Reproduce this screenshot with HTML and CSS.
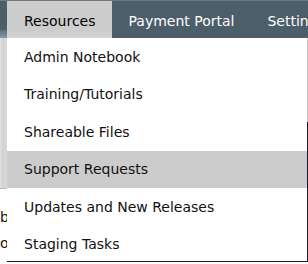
FILE: index.html
```html
<!DOCTYPE html>
<html>
<head>
<meta charset="utf-8">
<link rel="stylesheet" href="styles.css">
</head>
<body>
<nav class="nav">
  <div class="nav-edge"></div>
  <a class="tab tab-active">Resources</a>
  <a class="tab">Payment Portal</a>
  <a class="tab">Settings</a>
</nav>
<div class="page">
  <div class="strip"></div>
  <div class="content">
    <p class="line">b</p>
    <p class="line">of</p>
    <p class="line">rf</p>
  </div>
  <ul class="menu">
    <li class="item">Admin Notebook</li>
    <li class="item">Training/Tutorials</li>
    <li class="item">Shareable Files</li>
    <li class="item item-hover">Support Requests</li>
    <li class="item">Updates and New Releases</li>
    <li class="item">Staging Tasks</li>
  </ul>
  <div class="menu-edge"></div>
</div>
</body>
</html>
```
FILE: styles.css
```css
html, body {
  margin: 0;
  padding: 0;
  background: #ffffff;
  font-family: "DejaVu Sans", Verdana, sans-serif;
  font-size: 14px;
  overflow: hidden;
}
.nav {
  position: relative;
  display: flex;
  height: 37px;
  border-top: 1px solid #6f7a80;
  background: #4b5e6a;
  padding-left: 7px;
  white-space: nowrap;
  overflow: hidden;
}
.nav-edge {
  position: absolute;
  left: 0;
  bottom: 0;
  width: 7px;
  height: 8px;
  background: linear-gradient(#5d707c, #8797a1);
}
.tab {
  display: flex;
  align-items: center;
  padding: 2px 16px 0 17px;
  color: #ffffff;
}
.tab-active {
  background: linear-gradient(#cdcdcd 85%, #d6d6d6);
  color: #000000;
}
.page {
  position: relative;
  height: 226px;
  overflow: hidden;
}
.strip {
  width: 7px;
  height: 150px;
  background: linear-gradient(to right, #e4e4e4, #d2d2d2 30%, #d9d9d9);
  border-bottom: 1px solid #b8b8b8;
}
.content {
  width: 7px;
  margin-top: 15px;
  overflow: hidden;
}
.line {
  margin: 0;
  line-height: 26px;
  color: #111111;
  white-space: nowrap;
}
.menu {
  position: absolute;
  left: 7px;
  top: 0;
  width: 300px;
  height: 223px;
  margin: 0;
  padding: 0;
  list-style: none;
  background: #ffffff;
  border-right: 1px solid #1b1b2c;
  border-bottom: 1px solid #1b1b2c;
  overflow: hidden;
}
.menu-edge {
  position: absolute;
  left: 307px;
  top: 0;
  width: 1px;
  height: 84px;
  background: #c9c9c9;
}
.item {
  display: flex;
  align-items: center;
  height: 37.5px;
  padding-left: 17px;
  color: #111111;
  white-space: nowrap;
}
.item-hover {
  background: #cccccc;
}
```
